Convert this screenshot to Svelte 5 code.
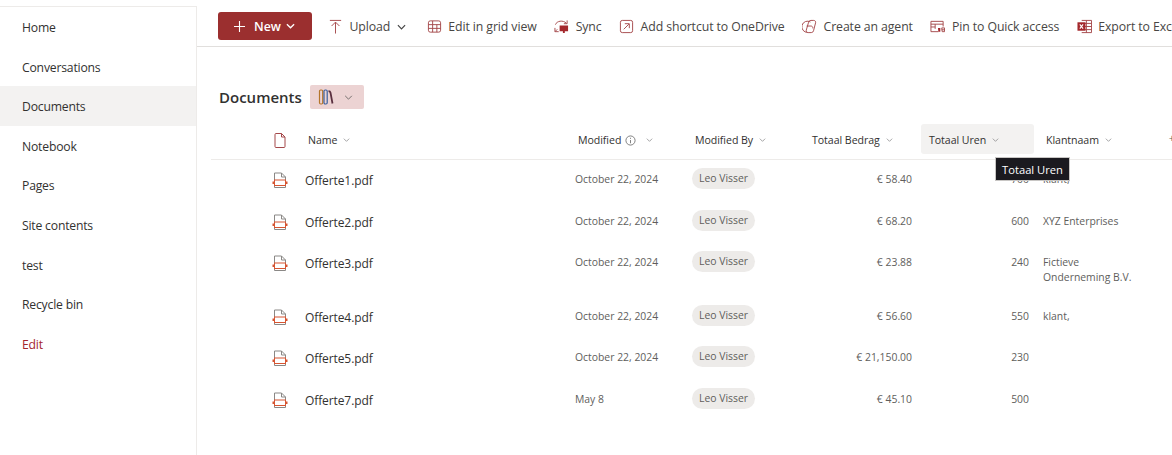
<script>
	const nav = ['Home', 'Conversations', 'Documents', 'Notebook', 'Pages', 'Site contents', 'test', 'Recycle bin', 'Edit'];

	const commands = [
		{ label: 'Upload', icon: 'upload', caret: true },
		{ label: 'Edit in grid view', icon: 'grid' },
		{ label: 'Sync', icon: 'sync' },
		{ label: 'Add shortcut to OneDrive', icon: 'shortcut' },
		{ label: 'Create an agent', icon: 'agent' },
		{ label: 'Pin to Quick access', icon: 'pin' },
		{ label: 'Export to Excel', icon: 'excel' }
	];

	const columns = ['Modified', 'Modified By', 'Totaal Bedrag', 'Totaal Uren', 'Klantnaam'];

	const files = [
		{ name: 'Offerte1.pdf', date: 'October 22, 2024', amount: '€ 58.40', hours: '700', client: 'klant,' },
		{ name: 'Offerte2.pdf', date: 'October 22, 2024', amount: '€ 68.20', hours: '600', client: 'XYZ Enterprises' },
		{ name: 'Offerte3.pdf', date: 'October 22, 2024', amount: '€ 23.88', hours: '240', client: 'Fictieve Onderneming B.V.', tall: true },
		{ name: 'Offerte4.pdf', date: 'October 22, 2024', amount: '€ 56.60', hours: '550', client: 'klant,' },
		{ name: 'Offerte5.pdf', date: 'October 22, 2024', amount: '€ 21,150.00', hours: '230', client: '' },
		{ name: 'Offerte7.pdf', date: 'May 8', amount: '€ 45.10', hours: '500', client: '' }
	];
</script>

{#snippet caret(cls)}
	<svg class={cls} viewBox="0 0 10 6" fill="none" stroke="currentColor"><path d="M1 1l4 4 4-4" /></svg>
{/snippet}

<div class="page">
	<nav class="side">
		{#each nav as item}
			<div class="nav-item" class:active={item === 'Documents'} class:edit={item === 'Edit'}>{item}</div>
		{/each}
	</nav>

	<main class="content">
		<div class="commands">
			<button class="new">
				<svg class="plus" viewBox="0 0 12 12" fill="none" stroke="#fff" stroke-width="1.2"><path d="M6 0v12M0 6h12" /></svg>
				<span>New</span>
				<svg class="new-caret" viewBox="0 0 10 6" fill="none" stroke="#fff" stroke-width="1.5"><path d="M1 1l4 4 4-4" /></svg>
			</button>

			{#each commands as cmd}
				<div class="cmd">
					<svg class="cmd-icon" viewBox="0 0 16 16" fill="none" stroke="#a4484a" stroke-width="1">
						{#if cmd.icon === 'upload'}
							<path d="M2 1.500h12M8 15.500V3.500M3.800 7.500L8 3.300l4.200 4.200" />
						{:else if cmd.icon === 'grid'}
							<rect x="1.500" y="2" width="13" height="12" rx="2" />
							<path d="M1.500 6h13M1.500 10h13M6 2v12M10.500 6v8" />
						{:else if cmd.icon === 'sync'}
							<path d="M1.500 6C3 2 9.500 .8 13.200 4.500M14 1.500v3.500h-3.500" />
							<path d="M1 9.500v4h4M1.200 13.300l2.300-2.300" />
							<path d="M6 7h9v6h-3.500v2h-2v-2H6z" fill="#a4282c" stroke="none" />
						{:else if cmd.icon === 'shortcut'}
							<rect x="1.500" y="1.500" width="13" height="13" rx="2" />
							<path d="M5 11L10.500 5.500M6.200 5h4.800v4.800" />
						{:else if cmd.icon === 'agent'}
							<path d="M9 3.200A6 6 0 1 0 6 14.300" />
							<path d="M9.500 1.500h3a2 2 0 0 1 2 2.500l-2.200 8.500a2.500 2.500 0 0 1-2.400 2H6.500a2 2 0 0 1-2-2.500l2.500-8.500a2.500 2.500 0 0 1 2.500-2z" />
							<path d="M5 7.500h4.500a2 2 0 0 1 2 2.500" />
						{:else if cmd.icon === 'pin'}
							<path d="M9 13.500H1V2.500h13V8" />
							<path d="M1 5.500h13M5.500 5.500v5M1 8.500h4.500" />
							<path d="M8.500 9.500h2.500v4H9z" fill="#a4282c" stroke="none" />
							<path d="M12.500 9.500h3v4h-2.500zM12.500 11.500h3" />
						{:else if cmd.icon === 'excel'}
							<path d="M5 1.500h10.500v13H5" />
							<path d="M10 1.500v13M8 4.700h7.500M8 8h7.500M8 11.300h7.500" />
							<rect x="0.500" y="3.500" width="8.500" height="9" fill="#a4282c" stroke="none" />
							<path d="M3 5.800l3.500 4.400M6.500 5.800L3 10.200" stroke="#fff" stroke-width="1.200" />
						{/if}
					</svg>
					<span>{cmd.label}</span>
					{#if cmd.caret}
						<svg class="upload-caret" viewBox="0 0 10 6" fill="none" stroke="#444" stroke-width="1.300"><path d="M1 1l4 4 4-4" /></svg>
					{/if}
				</div>
			{/each}
		</div>

		<div class="title-row">
			<h1>Documents</h1>
			<div class="view-btn">
				<svg class="books" viewBox="0 0 16 16" fill="none" stroke-width="1.200">
					<rect x="1.500" y="1" width="3.200" height="14" rx="1.200" stroke="#b5762c" />
					<rect x="6" y="1" width="3.200" height="14" rx="1.200" stroke="#3a5f9e" />
					<path d="M10.500 2.200c1.400 0 1.800.6 2 1.500L14.500 14.500" stroke="#5a3040" stroke-width="1.800" />
				</svg>
				{@render caret('view-caret')}
			</div>
		</div>

		<div class="table">
			<div class="row head">
				<svg class="doc-head" viewBox="0 0 12 15" fill="none" stroke="#a4484a"><path d="M1 1.500a1 1 0 0 1 1-1h5.500l3.500 3.500v9.500a1 1 0 0 1-1 1H2a1 1 0 0 1-1-1zM7.500.5v3.500H11" /></svg>
				<div class="th"><span>Name</span>{@render caret('th-caret')}</div>
				{#each columns as col}
					<div class="th" class:hovered={col === 'Totaal Uren'}>
						<span>{col}</span>
						{#if col === 'Modified'}
							<svg class="info" viewBox="0 0 12 12" fill="none" stroke="#777"><circle cx="6" cy="6" r="5" /><path d="M6 5.500v3.500M6 3v1.200" /></svg>
						{/if}
						{@render caret('th-caret')}
					</div>
				{/each}
				<div class="add">+</div>
			</div>

			{#each files as file}
				<div class="row" class:tall={file.tall}>
					<svg class="pdf" viewBox="0 0 16 16" fill="none">
						<path d="M2.500 8V1h7l4 4v3M2.500 14v1.500h11V14" stroke="#8a8886" />
						<path d="M9.500 1v4h4" stroke="#8a8886" />
						<rect x="2.500" y="8" width="11" height="5.500" fill="#fff" stroke="#d65532" />
						<rect x="0.500" y="9.500" width="2.500" height="2.500" fill="#d65532" />
						<rect x="13" y="9.500" width="2.500" height="2.500" fill="#d65532" />
					</svg>
					<div class="name">{file.name}</div>
					<div class="cell">{file.date}</div>
					<div class="chip-cell"><span class="chip">Leo Visser</span></div>
					<div class="cell num">{file.amount}</div>
					<div class="cell num">{file.hours}</div>
					<div class="cell client">{file.client}</div>
				</div>
			{/each}

			<div class="tooltip">Totaal Uren</div>
		</div>
	</main>
</div>

<style>
	:global(body) {
		margin: 0;
		background: #fff;
		font-family: 'Open Sans', 'Noto Sans', sans-serif;
		color: #323130;
	}

	.page {
		display: flex;
		height: 455px;
		width: 1172px;
		overflow: hidden;
	}

	.side {
		width: 197px;
		flex: none;
		margin-top: 6px;
		box-sizing: border-box;
		border-top: 1px solid #edebe9;
		border-right: 1px solid #edebe9;
	}

	.nav-item {
		height: 39.6px;
		line-height: 37.6px;
		padding: 2px 0 0 22px;
		box-sizing: border-box;
		font-size: 12.2px;
		letter-spacing: -0.2px;
		color: #323130;
	}

	.nav-item.active {
		background: #f3f2f1;
		font-weight: 500;
	}

	.nav-item.edit {
		color: #a4262c;
	}

	.content {
		flex: 1;
		min-width: 0;
		position: relative;
	}

	.commands {
		display: flex;
		align-items: center;
		height: 47px;
		padding: 5px 0 0 21px;
		box-sizing: border-box;
		border-bottom: 1px solid #e1dfdd;
		white-space: nowrap;
	}

	.new {
		display: flex;
		align-items: center;
		width: 94px;
		height: 28px;
		margin-right: 16px;
		padding: 1px 0 0 16px;
		box-sizing: border-box;
		background: #9b2f2f;
		border: none;
		border-radius: 3px;
		color: #fff;
		font: 600 12.4px 'Open Sans', sans-serif;
		flex: none;
	}

	.plus {
		width: 11px;
		height: 11px;
		margin-right: 9px;
	}

	.new-caret {
		width: 9px;
		height: 6px;
		margin-left: 5px;
	}

	.cmd {
		display: flex;
		align-items: center;
		margin-top: 2px;
		font-size: 12.3px;
		letter-spacing: -0.1px;
		color: #484644;
		flex: none;
		margin-right: 17.5px;
	}

	.cmd-icon {
		width: 15px;
		height: 15px;
		margin-right: 6.5px;
	}

	.upload-caret {
		width: 9px;
		height: 6px;
		margin: 0 3px 0 7px;
	}

	.title-row {
		display: flex;
		align-items: center;
		height: 24px;
		margin-top: 38px;
		padding-left: 22px;
	}

	h1 {
		margin: 0;
		font-size: 15px;
		font-weight: 600;
		color: #323130;
	}

	.view-btn {
		display: flex;
		align-items: center;
		width: 54px;
		height: 24px;
		margin-left: 8px;
		padding-left: 8px;
		box-sizing: border-box;
		background: #ecd3d3;
		border-radius: 2px;
	}

	.books {
		width: 16px;
		height: 16px;
	}

	.view-caret {
		width: 9px;
		height: 5px;
		margin-left: 10.5px;
		color: #605e5c;
	}

	.table {
		position: relative;
		margin: 12px 0 0 14px;
		font-size: 11px;
	}

	.row {
		display: grid;
		grid-template-columns: 94px 270px 117px 117px 117px 117px 1fr;
		align-items: start;
		height: 41.6px;
		white-space: nowrap;
	}

	.row.tall {
		height: 53.6px;
	}

	.row.head {
		height: 38px;
		border-bottom: 1px solid #edebe9;
		align-items: center;
	}

	.doc-head {
		width: 12px;
		height: 15px;
		margin-left: 63px;
	}

	.pdf {
		width: 16px;
		height: 16px;
		margin: 12px 0 0 61px;
	}

	.th {
		display: flex;
		align-items: center;
		padding-left: 3px;
		color: #323130;
		font-weight: 500;
		font-size: 10.6px;
		letter-spacing: -0.05px;
		position: relative;
	}

	.th.hovered::before {
		content: '';
		position: absolute;
		left: -5px;
		top: 50%;
		margin-top: -16px;
		width: 113px;
		height: 30px;
		background: #f3f2f1;
		border-radius: 3px;
		z-index: -1;
	}

	.th-caret {
		width: 7px;
		height: 4px;
		margin-left: 6px;
		color: #79797a;
	}

	.info {
		width: 11px;
		height: 11px;
		margin-left: 4px;
		margin-right: 4px;
	}

	.add {
		position: absolute;
		right: -3px;
		top: 9px;
		color: #605e5c;
	}

	.name {
		font-size: 12px;
		letter-spacing: -0.1px;
		line-height: 16px;
		margin-top: 13px;
		color: #323130;
	}

	.cell {
		font-size: 10.4px;
		line-height: 15px;
		margin-top: 12px;
		color: #605e5c;
	}

	.num {
		text-align: right;
		padding-right: 14px;
	}

	.client {
		white-space: normal;
		width: 100px;
	}

	.chip-cell {
		margin-top: 8px;
		font-size: 10.4px;
		color: #605e5c;
	}

	.chip {
		display: inline-block;
		height: 21px;
		line-height: 21px;
		padding: 0 7px;
		background: #edebe9;
		border-radius: 11px;
	}

	.tooltip {
		position: absolute;
		left: 784px;
		top: 36px;
		width: 75px;
		height: 24px;
		line-height: 23px;
		box-sizing: border-box;
		text-align: center;
		font-size: 11.2px;
		background: #1b1a1f;
		border: 1px solid #c8c6c4;
		color: #fff;
	}
</style>
